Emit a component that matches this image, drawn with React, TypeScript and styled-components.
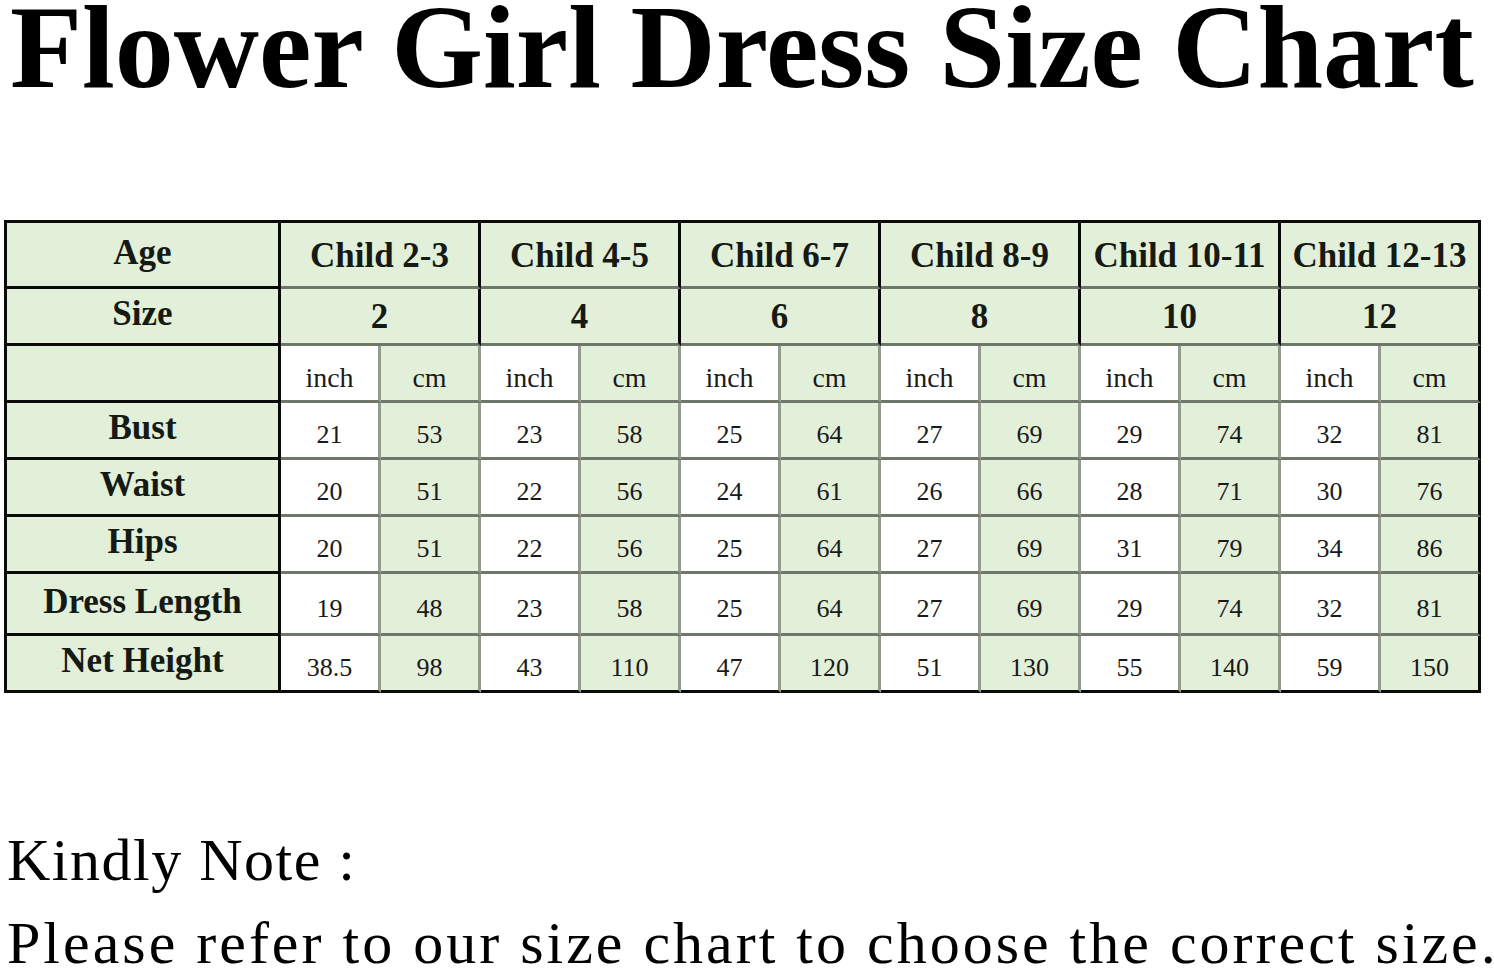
import { FC } from "react";
import styled, { createGlobalStyle } from "styled-components";

const GlobalStyle = createGlobalStyle`
  html, body {
    margin: 0;
    padding: 0;
    background: #ffffff;
  }
  body {
    font-family: "Liberation Serif", "Times New Roman", serif;
    color: #111111;
  }
`;

const GREEN = "#e2efd9";
const BLACK = "#0a0a0a";
const ROW_LINE = "#6f776a";
const COL_LINE = "#939b8e";

type Group = { age: string; size: string };

const groups: Group[] = [
  { age: "Child 2-3", size: "2" },
  { age: "Child 4-5", size: "4" },
  { age: "Child 6-7", size: "6" },
  { age: "Child 8-9", size: "8" },
  { age: "Child 10-11", size: "10" },
  { age: "Child 12-13", size: "12" },
];

const rows: { label: string; values: string[] }[] = [
  { label: "Bust", values: ["21", "53", "23", "58", "25", "64", "27", "69", "29", "74", "32", "81"] },
  { label: "Waist", values: ["20", "51", "22", "56", "24", "61", "26", "66", "28", "71", "30", "76"] },
  { label: "Hips", values: ["20", "51", "22", "56", "25", "64", "27", "69", "31", "79", "34", "86"] },
  { label: "Dress Length", values: ["19", "48", "23", "58", "25", "64", "27", "69", "29", "74", "32", "81"] },
  { label: "Net Height", values: ["38.5", "98", "43", "110", "47", "120", "51", "130", "55", "140", "59", "150"] },
];

export default function App() {
  return (
    <>
      <GlobalStyle />
      <Page>
        <Title>Flower Girl Dress Size Chart</Title>
        <Chart>
          <LabelCell>Age</LabelCell>
          {groups.map((g) => (
            <HeadCell key={g.age}>{g.age}</HeadCell>
          ))}
          <LabelCell>Size</LabelCell>
          {groups.map((g) => (
            <HeadCell key={g.size}>{g.size}</HeadCell>
          ))}
          <LabelCell />
          {groups.map((g, i) => (
            <UnitPair key={g.age + "u"} a="inch" b="cm" last={false} edge={i === groups.length - 1} unit />
          ))}
          {rows.map((r, ri) => (
            <MeasureRow key={r.label} label={r.label} values={r.values} last={ri === rows.length - 1} />
          ))}
        </Chart>
        <Note>
          <NoteTitle>Kindly Note :</NoteTitle>
          <NoteText>Please refer to our size chart to choose the correct size.</NoteText>
        </Note>
      </Page>
    </>
  );
}

const MeasureRow: FC<{ label: string; values: string[]; last: boolean }> = ({
  label,
  values,
  last,
}) => (
  <>
    <LabelCell>{label}</LabelCell>
    {groups.map((g, i) => (
      <UnitPair
        key={g.age}
        a={values[i * 2]}
        b={values[i * 2 + 1]}
        last={last}
        edge={i === groups.length - 1}
      />
    ))}
  </>
);

const UnitPair: FC<{ a: string; b: string; last: boolean; edge: boolean; unit?: boolean }> = ({
  a,
  b,
  last,
  edge,
  unit,
}) => (
  <>
    <DataCell $green={false} $last={last} $edge={false} $unit={!!unit}>
      {a}
    </DataCell>
    <DataCell $green $last={last} $edge={edge} $unit={!!unit}>
      {b}
    </DataCell>
  </>
);

const Page = styled.div`
  width: 1494px;
  height: 972px;
  overflow: hidden;
`;

const Title = styled.h1`
  margin: 0 0 0 10px;
  height: 100px;
  font-family: "Liberation Serif", "Times New Roman", serif;
  font-weight: 700;
  font-size: 118px;
  line-height: 95px;
  color: #000;
  white-space: nowrap;
`;

const Chart = styled.div`
  display: grid;
  grid-template-columns: 274px repeat(12, 100px);
  grid-template-rows: 66px 57px 57px 57px 57px 57px 62px 57px;
  margin: 120px 0 0 4px;
  width: max-content;
  border-left: 3px solid ${BLACK};
  border-top: 3px solid ${BLACK};
`;

const BaseCell = styled.div`
  box-sizing: border-box;
  display: flex;
  align-items: center;
  justify-content: center;
  border-right: 3px solid;
  border-bottom: 3px solid;
  white-space: nowrap;
`;

const LabelCell = styled(BaseCell)`
  background: ${GREEN};
  border-color: ${BLACK};
  font-weight: 700;
  font-size: 35px;
  color: #161a14;
  padding-bottom: 4px;
`;

const HeadCell = styled(BaseCell)`
  grid-column: span 2;
  background: ${GREEN};
  border-right-color: ${BLACK};
  border-bottom-color: ${ROW_LINE};
  font-weight: 700;
  font-size: 35px;
  color: #161a14;
  padding-top: 2px;
`;

const DataCell = styled(BaseCell)<{
  $green: boolean;
  $last: boolean;
  $edge: boolean;
  $unit: boolean;
}>`
  background: ${(p) => (p.$green ? GREEN : "#ffffff")};
  border-right-color: ${(p) => (p.$edge ? BLACK : COL_LINE)};
  border-bottom-color: ${(p) => (p.$last ? BLACK : ROW_LINE)};
  font-size: ${(p) => (p.$unit ? "28px" : "26px")};
  color: #1a1a1a;
  padding-top: 10px;
`;

const Note = styled.div`
  margin: 130px 0 0 7px;
  display: flex;
  flex-direction: column;
`;

const NoteTitle = styled.div`
  font-size: 60px;
  line-height: 74px;
  letter-spacing: 1.5px;
  color: #000;
  white-space: nowrap;
`;

const NoteText = styled.div`
  margin-top: 6px;
  font-size: 60px;
  line-height: 80px;
  letter-spacing: 3px;
  color: #000;
  white-space: nowrap;
`;
